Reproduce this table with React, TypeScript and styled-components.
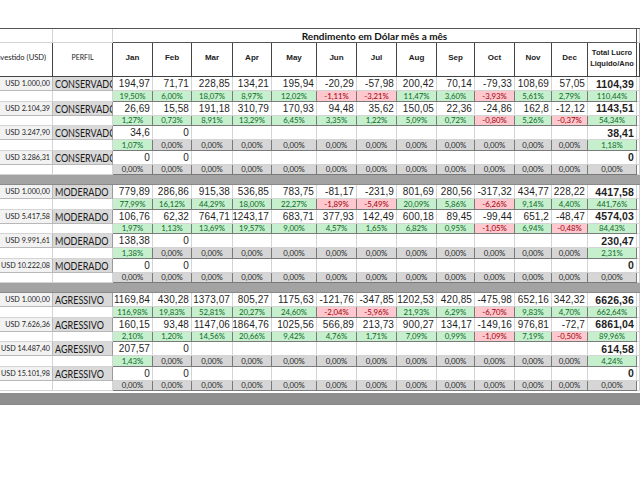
import React from "react";
import styled, { createGlobalStyle, css } from "styled-components";

const Global = createGlobalStyle`
  html, body { margin: 0; padding: 0; background: #ffffff; }
  #root { width: 640px; height: 480px; overflow: hidden; }
`;

const COLS =
  "53px 60px 40px 39px 41px 39px 45px 40px 40px 40px 38px 40px 37px 36px 49px 3px";

const CAL = `Lato, "Open Sans", sans-serif`;
const HEL = `"Liberation Sans", Arial, sans-serif`;

const Sheet = styled.div`
  padding-top: 28px;
  width: 640px;
`;

const Row = styled.div<{ $h: number }>`
  display: grid;
  grid-template-columns: ${COLS};
  height: ${(p) => p.$h}px;
`;

const TitleRow = styled(Row)`
  border-top: 1px solid #555;
  box-sizing: border-box;
`;

const BlankCell = styled.div<{ $line?: string }>`
  border-right: 1px solid ${(p) => p.$line || "#d4d4d4"};
  border-bottom: 1px solid ${(p) => p.$line || "#d4d4d4"};
  box-sizing: border-box;
  background: #fff;
`;

const TitleCell = styled.div`
  grid-column: 3 / 16;
  display: flex;
  align-items: center;
  justify-content: center;
  font-family: ${CAL};
  font-weight: 700;
  font-size: 10px;
  color: #111;
  border-bottom: 1px solid #555;
  border-right: 1px solid #555;
  box-sizing: border-box;
`;

const HeadCell = styled.div<{ $align?: string; $bold?: boolean; $font?: "cal" | "hel" }>`
  display: flex;
  align-items: center;
  justify-content: ${(p) => p.$align || "center"};
  text-align: center;
  overflow: hidden;
  white-space: nowrap;
  font-family: ${(p) => (p.$font === "hel" ? HEL : CAL)};
  font-weight: ${(p) => (p.$bold ? 700 : 400)};
  font-size: ${(p) => (p.$font === "hel" ? "8px" : "7px")};
  line-height: 1.45;
  color: #222;
  border-right: 1px solid #444;
  border-bottom: 1px solid #444;
  box-sizing: border-box;
  padding: 0 0 4px 0;
`;

const HeadLeft = styled(HeadCell)`
  padding-right: 6px;
  font-size: 7.6px;
`;

const TotalHead = styled(HeadCell)`
  white-space: normal;
  padding: 0 0 4px 0;
  font-size: 7.5px;
  line-height: 11px;
`;

const InvestCell = styled.div`
  display: flex;
  align-items: center;
  justify-content: flex-end;
  padding-right: 2px;
  font-family: ${CAL};
  font-size: 7.2px;
  color: #222;
  background: #f2f2f2;
  border-right: 1px solid #b8b8b8;
  border-bottom: 1px solid #b8b8b8;
  box-sizing: border-box;
  white-space: nowrap;
  overflow: hidden;
`;

const PerfilCell = styled.div`
  display: flex;
  align-items: center;
  padding-left: 2px;
  background: #d9d9d9;
  border-right: 1px solid #9a9a9a;
  border-bottom: 1px solid #b8b8b8;
  box-sizing: border-box;
  white-space: nowrap;
  overflow: hidden;
`;

const PerfilText = styled.span`
  display: inline-block;
  font-family: ${CAL};
  font-size: 11px;
  color: #1a1a1a;
  transform: scaleX(0.82);
  transform-origin: left center;
`;

const NumCell = styled.div<{ $bold?: boolean }>`
  display: flex;
  align-items: center;
  justify-content: flex-end;
  padding-right: 2px;
  font-family: ${HEL};
  font-size: ${(p) => (p.$bold ? "10.5px" : "10px")};
  font-weight: ${(p) => (p.$bold ? 700 : 400)};
  letter-spacing: 0.1px;
  color: #1f1f1f;
  border-right: 1px solid #d4d4d4;
  border-bottom: 1px solid #d4d4d4;
  box-sizing: border-box;
  white-space: nowrap;
  overflow: hidden;
`;

type Tone = "pos" | "neg" | "zero";

const tones = {
  pos: css`
    background: #c6efce;
    color: #0b6a1e;
  `,
  neg: css`
    background: #ffc7ce;
    color: #9c0006;
  `,
  zero: css`
    background: #d6d6d6;
    color: #2a2a2a;
  `,
};

const PctCell = styled.div<{ $tone: Tone }>`
  display: flex;
  align-items: center;
  justify-content: center;
  font-family: ${CAL};
  font-size: 7.8px;
  border-right: 1px solid #7a7a7a;
  border-bottom: 1px solid #7a7a7a;
  box-sizing: border-box;
  white-space: nowrap;
  overflow: hidden;
  ${(p) => tones[p.$tone]}
`;

const Band = styled.div`
  height: 10px;
  width: 640px;
  background: #a3a3a3;
  border-bottom: 1px solid #8a8a8a;
  box-sizing: border-box;
`;

const BottomBand = styled(Band)`
  height: 12px;
  margin-top: 2px;
  background: #8e8e8e;
`;

type Entry = {
  invest: string;
  vals: (string | null)[];
  total: string;
  pcts: string[];
  totalPct: string;
};

type Group = { perfil: string; entries: Entry[] };

const MONTHS = ["Jan", "Feb", "Mar", "Apr", "May", "Jun", "Jul", "Aug", "Sep", "Oct", "Nov", "Dec"];

const sparse = (a: string, b: string): (string | null)[] => [a, b, ...Array(10).fill(null)];
const zeros = (a: string): string[] => [a, ...Array(11).fill("0,00%")];

const GROUPS: Group[] = [
  {
    perfil: "CONSERVADOR",
    entries: [
      {
        invest: "USD 1.000,00",
        vals: ["194,97", "71,71", "228,85", "134,21", "195,94", "-20,29", "-57,98", "200,42", "70,14", "-79,33", "108,69", "57,05"],
        total: "1104,39",
        pcts: ["19,50%", "6,00%", "18,07%", "8,97%", "12,02%", "-1,11%", "-3,21%", "11,47%", "3,60%", "-3,93%", "5,61%", "2,79%"],
        totalPct: "110,44%",
      },
      {
        invest: "USD 2.104,39",
        vals: ["26,69", "15,58", "191,18", "310,79", "170,93", "94,48", "35,62", "150,05", "22,36", "-24,86", "162,8", "-12,12"],
        total: "1143,51",
        pcts: ["1,27%", "0,73%", "8,91%", "13,29%", "6,45%", "3,35%", "1,22%", "5,09%", "0,72%", "-0,80%", "5,26%", "-0,37%"],
        totalPct: "54,34%",
      },
      { invest: "USD 3.247,90", vals: sparse("34,6", "0"), total: "38,41", pcts: zeros("1,07%"), totalPct: "1,18%" },
      { invest: "USD 3.286,31", vals: sparse("0", "0"), total: "0", pcts: zeros("0,00%"), totalPct: "0,00%" },
    ],
  },
  {
    perfil: "MODERADO",
    entries: [
      {
        invest: "USD 1.000,00",
        vals: ["779,89", "286,86", "915,38", "536,85", "783,75", "-81,17", "-231,9", "801,69", "280,56", "-317,32", "434,77", "228,22"],
        total: "4417,58",
        pcts: ["77,99%", "16,12%", "44,29%", "18,00%", "22,27%", "-1,89%", "-5,49%", "20,09%", "5,86%", "-6,26%", "9,14%", "4,40%"],
        totalPct: "441,76%",
      },
      {
        invest: "USD 5.417,58",
        vals: ["106,76", "62,32", "764,71", "1243,17", "683,71", "377,93", "142,49", "600,18", "89,45", "-99,44", "651,2", "-48,47"],
        total: "4574,03",
        pcts: ["1,97%", "1,13%", "13,69%", "19,57%", "9,00%", "4,57%", "1,65%", "6,82%", "0,95%", "-1,05%", "6,94%", "-0,48%"],
        totalPct: "84,43%",
      },
      { invest: "USD 9.991,61", vals: sparse("138,38", "0"), total: "230,47", pcts: zeros("1,38%"), totalPct: "2,31%" },
      { invest: "USD 10.222,08", vals: sparse("0", "0"), total: "0", pcts: zeros("0,00%"), totalPct: "0,00%" },
    ],
  },
  {
    perfil: "AGRESSIVO",
    entries: [
      {
        invest: "USD 1.000,00",
        vals: ["1169,84", "430,28", "1373,07", "805,27", "1175,63", "-121,76", "-347,85", "1202,53", "420,85", "-475,98", "652,16", "342,32"],
        total: "6626,36",
        pcts: ["116,98%", "19,83%", "52,81%", "20,27%", "24,60%", "-2,04%", "-5,96%", "21,93%", "6,29%", "-6,70%", "9,83%", "4,70%"],
        totalPct: "662,64%",
      },
      {
        invest: "USD 7.626,36",
        vals: ["160,15", "93,48", "1147,06", "1864,76", "1025,56", "566,89", "213,73", "900,27", "134,17", "-149,16", "976,81", "-72,7"],
        total: "6861,04",
        pcts: ["2,10%", "1,20%", "14,56%", "20,66%", "9,42%", "4,76%", "1,71%", "7,09%", "0,99%", "-1,09%", "7,19%", "-0,50%"],
        totalPct: "89,96%",
      },
      { invest: "USD 14.487,40", vals: sparse("207,57", "0"), total: "614,58", pcts: zeros("1,43%"), totalPct: "4,24%" },
      { invest: "USD 15.101,98", vals: sparse("0", "0"), total: "0", pcts: zeros("0,00%"), totalPct: "0,00%" },
    ],
  },
];

const toneOf = (v: string): Tone => (v.startsWith("-") ? "neg" : v === "0,00%" ? "zero" : "pos");

function EntryRows({ perfil, e }: { perfil: string; e: Entry }) {
  return (
    <>
      <Row $h={14}>
        <InvestCell>{e.invest}</InvestCell>
        <PerfilCell>
          <PerfilText>{perfil}</PerfilText>
        </PerfilCell>
        {e.vals.map((v, i) => (
          <NumCell key={i}>{v ?? ""}</NumCell>
        ))}
        <NumCell $bold>{e.total}</NumCell>
        <BlankCell />
      </Row>
      <Row $h={10.5}>
        <BlankCell />
        <BlankCell />
        {e.pcts.map((p, i) => (
          <PctCell key={i} $tone={toneOf(p)}>
            {p}
          </PctCell>
        ))}
        <PctCell $tone={toneOf(e.totalPct)}>{e.totalPct}</PctCell>
        <BlankCell />
      </Row>
    </>
  );
}

export default function App() {
  return (
    <>
      <Global />
      <Sheet>
        <TitleRow $h={15}>
          <BlankCell />
          <BlankCell />
          <TitleCell>Rendimento em Dólar mês a mês</TitleCell>
          <BlankCell />
        </TitleRow>
        <Row $h={34}>
          <HeadLeft $align="flex-end">Valor Investido (USD)</HeadLeft>
          <HeadCell>PERFIL</HeadCell>
          {MONTHS.map((m) => (
            <HeadCell key={m} $bold $font="hel">
              {m}
            </HeadCell>
          ))}
          <TotalHead $bold $font="hel">
            Total Lucro
            <br />
            Liquido/Ano
          </TotalHead>
          <BlankCell $line="#444" />
        </Row>
        {GROUPS.map((g, gi) => (
          <React.Fragment key={g.perfil}>
            {g.entries.map((e, i) => (
              <EntryRows key={i} perfil={g.perfil} e={e} />
            ))}
            {gi < GROUPS.length - 1 ? <Band /> : <BottomBand />}
          </React.Fragment>
        ))}
      </Sheet>
    </>
  );
}
